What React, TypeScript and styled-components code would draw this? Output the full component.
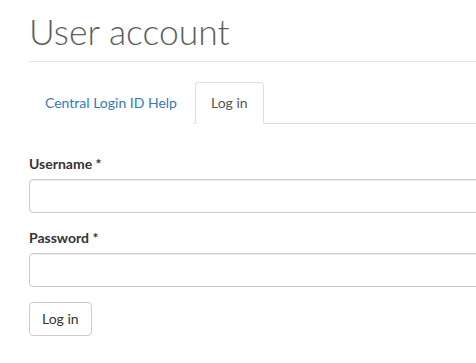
import React from 'react';
import styled, { createGlobalStyle } from 'styled-components';

const GlobalStyle = createGlobalStyle`
  html, body {
    margin: 0;
    padding: 0;
    background: #fff;
    overflow: hidden;
  }
  body {
    font-family: Lato, "Open Sans", sans-serif;
    font-size: 14px;
    line-height: 20px;
    color: #333;
  }
`;

// Le contenu est plus large que la fenêtre : les champs sortent à droite
const Page = styled.main`
  padding: 12px 0 0 29px;
  width: 720px;
`;

const PageHeader = styled.header`
  border-bottom: 1px solid #e6e6e6;
  padding-bottom: 9px;
  margin-bottom: 20px;
`;

const Title = styled.h1`
  margin: 0;
  font-family: Lato, sans-serif;
  font-weight: 300;
  font-size: 35.5px;
  line-height: 39.6px;
  color: #5e5e5e;
`;

const Tabs = styled.ul`
  display: flex;
  list-style: none;
  margin: 0 0 30px;
  padding: 0;
  border-bottom: 1px solid #ddd;
`;

const Tab = styled.li<{ $active?: boolean }>`
  margin: 0 2px -1px 0;
  padding: 10px 15px;
  line-height: 20px;
  border: 1px solid ${p => (p.$active ? '#ddd' : 'transparent')};
  border-bottom-color: ${p => (p.$active ? '#fff' : 'transparent')};
  border-radius: 4px 4px 0 0;
  background: #fff;
  color: ${p => (p.$active ? '#555' : '#337ab7')};
  cursor: ${p => (p.$active ? 'default' : 'pointer')};
`;

const Field = styled.div`
  margin-bottom: 15px;
`;

const Label = styled.label`
  display: block;
  margin-bottom: 5px;
  font-weight: 700;
  color: #333;
`;

const Input = styled.input`
  display: block;
  box-sizing: border-box;
  width: 100%;
  height: 34px;
  padding: 6px 12px;
  font: inherit;
  border: 1px solid #ccc;
  border-radius: 4px;
  box-shadow: inset 0 1px 1px rgba(0, 0, 0, 0.075);
  outline: none;
`;

const Button = styled.button`
  height: 34px;
  padding: 6px 12px;
  font: inherit;
  color: #333;
  background: #fff;
  border: 1px solid #ccc;
  border-radius: 4px;
  cursor: pointer;
`;

const App: React.FC = () => (
  <>
    <GlobalStyle />
    <Page>
      <PageHeader>
        <Title>User account</Title>
      </PageHeader>
      <Tabs>
        <Tab>Central Login ID Help</Tab>
        <Tab $active>Log in</Tab>
      </Tabs>
      <form onSubmit={e => e.preventDefault()}>
        <Field>
          <Label htmlFor="edit-name">Username *</Label>
          <Input id="edit-name" type="text" />
        </Field>
        <Field>
          <Label htmlFor="edit-pass">Password *</Label>
          <Input id="edit-pass" type="password" />
        </Field>
        <Button type="submit">Log in</Button>
      </form>
    </Page>
  </>
);

export default App;
